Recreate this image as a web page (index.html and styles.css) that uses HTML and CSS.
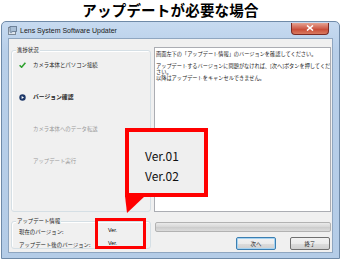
FILE: index.html
```html
<!DOCTYPE html>
<html lang="ja">
<head>
<meta charset="utf-8">
<title>アップデートが必要な場合</title>
<link rel="stylesheet" href="styles.css">
</head>
<body>
<h1 class="heading">アップデートが必要な場合</h1>
<div class="window">
  <div class="titlebar">
    <svg class="app-icon" viewBox="0 0 9 9" width="9" height="9">
      <rect x="0.5" y="1.5" width="7" height="7" fill="#dfe6ee" stroke="#7d8a99" stroke-width="1"/>
      <rect x="2" y="0.5" width="6.5" height="5" fill="#a9bfd6" stroke="#5d7088" stroke-width="0.8"/>
      <circle cx="3" cy="6" r="1.3" fill="#8da1b6"/>
    </svg>
    <span class="title">Lens System Software Updater</span>
    <div class="close">
      <svg viewBox="0 0 8 6" width="8" height="6"><path d="M1 0.5 L7 5.5 M7 0.5 L1 5.5" stroke="#fff" stroke-width="1.6"/></svg>
    </div>
  </div>
  <div class="client">
    <div class="top">
      <div class="group steps-group">
        <span class="legend">進捗状況</span>
        <ul class="steps">
          <li class="step done">
            <svg class="step-icon" viewBox="0 0 7 6" width="7" height="6"><path d="M0.6 3.2 L2.6 5.2 L6.4 0.8" fill="none" stroke="#2fa12f" stroke-width="1.6"/></svg>
            <span>カメラ本体とパソコン接続</span>
          </li>
          <li class="step current">
            <svg class="step-icon" viewBox="0 0 7 7" width="7" height="7"><circle cx="3.5" cy="3.5" r="3.2" fill="#1d3768"/><path d="M2.6 1.9 L5 3.5 L2.6 5.1 Z" fill="#fff"/></svg>
            <span>バージョン確認</span>
          </li>
          <li class="step todo"><span class="step-icon"></span><span>カメラ本体へのデータ転送</span></li>
          <li class="step todo"><span class="step-icon"></span><span>アップデート実行</span></li>
        </ul>
      </div>
      <div class="message">
        <p>画面左下の「アップデート情報」のバージョンを確認してください。</p>
        <p>アップデートするバージョンに問題がなければ、[次へ]ボタンを押してくだ<br>さい。<br>以降はアップデートをキャンセルできません。</p>
      </div>
    </div>
    <div class="bottom">
      <div class="group info-group">
        <span class="legend">アップデート情報</span>
        <div class="info-row"><span class="info-label">現在のバージョン:</span><span class="info-value">Ver.</span></div>
        <div class="info-row"><span class="info-label">アップデート後のバージョン:</span><span class="info-value">Ver.</span></div>
      </div>
      <div class="actions">
        <div class="progressbar"></div>
        <div class="buttons">
          <button class="btn default">次へ</button>
          <button class="btn">終了</button>
        </div>
      </div>
    </div>
  </div>
</div>
<div class="callout">
  <div class="callout-box">Ver.01<br>Ver.02</div>
  <svg class="callout-tail" viewBox="0 0 22 18" width="22" height="18"><polygon points="0,0 20,0 2,17" fill="#ff0000"/></svg>
</div>
<div class="highlight"></div>
</body>
</html>
```

FILE: styles.css
```css
* { box-sizing: border-box; }

html, body {
  margin: 0;
  padding: 0;
}

body {
  width: 341px;
  height: 261px;
  background: #ffffff;
  position: relative;
  overflow: hidden;
  font-family: "Noto Sans CJK JP", "Noto Sans", sans-serif;
  color: #000;
}

.heading {
  margin: 0;
  height: 21px;
  padding-top: 0;
  font-size: 14.5px;
  line-height: 19px;
  font-weight: 700;
  text-align: center;
  letter-spacing: 0.2px;
}

.window {
  margin: 0 1px;
  height: 238px;
  border: 1px solid #6f8aa8;
  border-radius: 5px 5px 0 0;
  background: linear-gradient(#c7daf0, #b8cfe9 30px, #b4cce7);
  padding: 0 6px 5px 6px;
  display: flex;
  flex-direction: column;
}

.titlebar {
  height: 16px;
  display: flex;
  align-items: center;
  gap: 3px;
}

.app-icon { flex: none; }

.title {
  font-family: "Liberation Sans", Arial, sans-serif;
  font-size: 7px;
  color: #1a1a1a;
  flex: 1;
  padding-top: 1px;
}

.close {
  width: 38px;
  height: 12px;
  margin-top: -3px;
  margin-right: 4px;
  border: 1px solid #7a2a24;
  border-top: none;
  border-radius: 0 0 4px 4px;
  background: linear-gradient(#e5a392, #cf5d4b 50%, #c74632 51%, #d97a5f);
  display: flex;
  align-items: center;
  justify-content: center;
}

.client {
  flex: 1;
  background: #f0f0f0;
  border: 1px solid #8fa6c0;
  padding: 8px 1px 2px 2px;
  display: flex;
  flex-direction: column;
  font-size: 5.4px;
  line-height: 6px;
}

.top {
  display: grid;
  grid-template-columns: 140px 1fr;
  gap: 3px;
  height: 165px;
}

.group {
  border: 1px solid #d5dfe5;
  border-radius: 3px;
  box-shadow: inset 1px 1px 0 #fff;
  position: relative;
}

.legend {
  position: absolute;
  top: -4px;
  left: 4px;
  padding: 0 1px;
  background: #f0f0f0;
  font-size: 5.4px;
  line-height: 6px;
  color: #1a1a1a;
}

.steps-group {
  margin-top: 3px;
}

.steps {
  list-style: none;
  margin: 0;
  padding: 10px 0 0 7px;
  display: flex;
  flex-direction: column;
  gap: 24px;
}

.step {
  display: flex;
  align-items: center;
  gap: 7px;
  height: 8px;
  color: #222;
}

.step-icon {
  width: 7px;
  flex: none;
}

.step.current span {
  font-weight: 700;
  font-size: 5.8px;
}

.step.todo {
  color: #9a9a9a;
}

.message {
  background: #fff;
  border: 1px solid #abadb3;
  padding: 3px 0 3px 1px;
  color: #1a1a1a;
  font-size: 5.2px;
  line-height: 6px;
  white-space: nowrap;
  overflow: hidden;
}

.message p {
  margin: 0 0 6px 0;
}

.bottom {
  flex: 1;
  display: grid;
  grid-template-columns: 140px 1fr;
  gap: 4px;
  padding-top: 9px;
}

.info-group {
  padding: 6px 0 0 7px;
  display: flex;
  flex-direction: column;
  gap: 6px;
  margin-bottom: 1px;
}

.info-row {
  display: flex;
  height: 7px;
  align-items: center;
}

.info-label {
  width: 89px;
  color: #222;
}

.info-value {
  font-family: "Liberation Sans", Arial, sans-serif;
  font-size: 5.4px;
  margin-top: -3px;
}

.actions {
  display: flex;
  flex-direction: column;
  gap: 5px;
  padding-top: 1px;
}

.progressbar {
  height: 10px;
  border: 1px solid #b2b2b2;
  border-radius: 2px;
  background: linear-gradient(#eaeaea, #d6d6d6 50%, #cbcbcb 51%, #dcdcdc);
}

.buttons {
  display: flex;
  justify-content: flex-end;
  gap: 14px;
  padding-right: 1px;
}

.btn {
  width: 40px;
  height: 13px;
  margin: 0;
  padding: 0;
  font-family: "Noto Sans CJK JP", sans-serif;
  font-size: 5.4px;
  line-height: 6px;
  color: #222;
  border: 1px solid #707070;
  border-radius: 2px;
  background: linear-gradient(#f2f2f2, #ebebeb 50%, #dddddd 51%, #cfcfcf);
}

.btn.default {
  border-color: #3c7fb1;
  box-shadow: inset 0 0 0 1px #a6d3f2;
}

.callout {
  position: absolute;
  left: 125px;
  top: 128px;
}

.callout-box {
  width: 83px;
  height: 69px;
  border: 4px solid #ff0000;
  background: #efefef;
  padding: 14px 0 0 16px;
  font-family: "Noto Sans CJK JP", sans-serif;
  font-size: 12px;
  line-height: 20px;
  color: #111;
}

.callout-tail {
  display: block;
  margin-top: -1px;
}

.highlight {
  position: absolute;
  left: 95px;
  top: 218px;
  width: 51px;
  height: 31px;
  border: 3px solid #ff0000;
}
```
